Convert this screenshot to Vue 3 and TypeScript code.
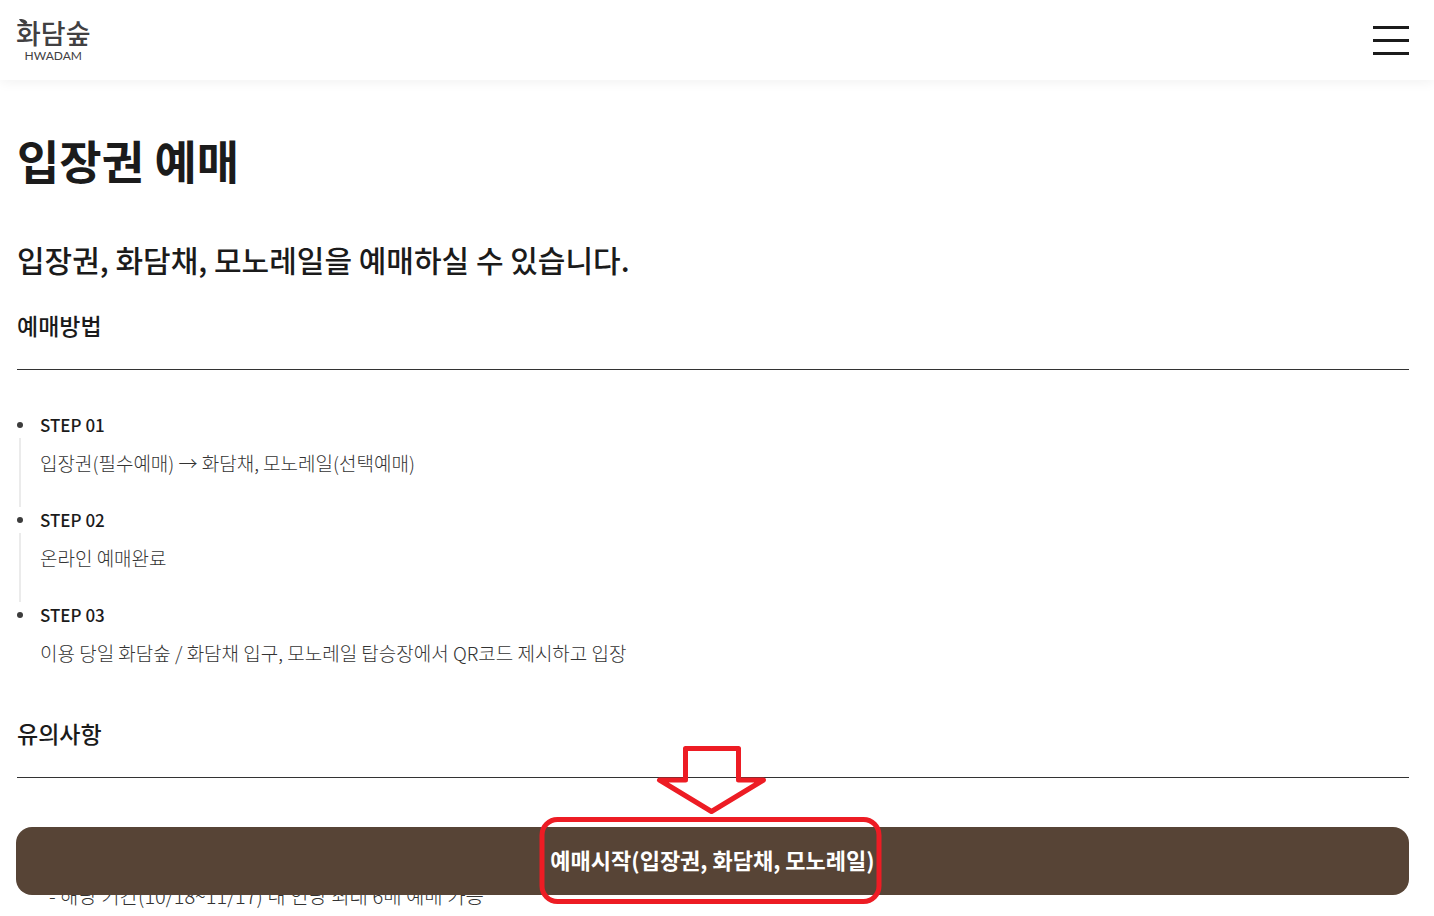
<script setup lang="ts">
interface Step {
  title: string
  text: string
}

const steps: Step[] = [
  { title: 'STEP 01', text: '입장권(필수예매) → 화담채, 모노레일(선택예매)' },
  { title: 'STEP 02', text: '온라인 예매완료' },
  { title: 'STEP 03', text: '이용 당일 화담숲 / 화담채 입구, 모노레일 탑승장에서 QR코드 제시하고 입장' },
]
</script>

<template>
  <div class="page">
    <header class="header">
      <a class="logo" href="#">
        <svg class="leaf" width="9" height="5" viewBox="0 0 9 5" aria-hidden="true">
          <path d="M0 0C4 -0.400 8 1 8.500 4.500C4.500 5 1.500 3.500 0 0Z" fill="#414042" />
        </svg>
        <span class="logo-name">화담숲</span>
        <span class="logo-latin">HWADAM</span>
      </a>
      <button class="menu" type="button" aria-label="메뉴"><span></span><span></span><span></span></button>
    </header>

    <main class="content">
      <h1>입장권 예매</h1>
      <h2>입장권, 화담채, 모노레일을 예매하실 수 있습니다.</h2>

      <section>
        <h3>예매방법</h3>
        <ol class="steps">
          <li v-for="step in steps" :key="step.title">
            <strong>{{ step.title }}</strong>
            <p>{{ step.text }}</p>
          </li>
        </ol>
      </section>

      <section>
        <h3>유의사항</h3>
        <ul class="notes">
          <li>입장권, 화담채, 모노레일 예매 가능 수량 안내</li>
          <li class="sub">- 해당 기간(10/18~11/17) 내 인당 최대 6매 예매 가능</li>
        </ul>
      </section>
    </main>

    <div class="booking">
      <button class="start" type="button">예매시작(입장권, 화담채, 모노레일)</button>
      <div class="highlight" aria-hidden="true">
        <svg width="112" height="70" viewBox="0 0 112 70" fill="none" stroke="#ed1c24" stroke-width="5" stroke-linejoin="round">
          <path d="M31 3.500H84V35H109L57 66.500L5 35H31Z" />
        </svg>
        <div class="frame"></div>
      </div>
    </div>
  </div>
</template>

<style>
html,
body {
  margin: 0;
  background: #fff;
  overflow: hidden;
}
</style>

<style scoped>
.page {
  height: 100vh;
  overflow: hidden;
  color: #1b1b1b;
  font-family: "Noto Sans CJK KR", sans-serif;
}

.header {
  display: flex;
  justify-content: space-between;
  align-items: center;
  height: 80px;
  padding: 0 25px 0 16px;
  box-sizing: border-box;
  box-shadow: 0 2px 12px rgba(0, 0, 0, 0.06);
}

.logo {
  position: relative;
  display: flex;
  flex-direction: column;
  align-items: center;
  gap: 2px;
  color: #414042;
  text-decoration: none;
}

.leaf {
  position: absolute;
  top: 1px;
  left: 3px;
}

.logo-name {
  font-size: 27px;
  font-weight: 500;
  line-height: 30px;
}

.logo-latin {
  font-family: Lato, sans-serif;
  font-size: 12px;
  line-height: 12px;
}

.menu {
  display: flex;
  flex-direction: column;
  gap: 10px;
  width: 36px;
  padding: 0;
  border: 0;
  background: none;
}

.menu span {
  height: 3px;
  background: #1b1b1b;
}

.content {
  padding: 45px 25px 0 17px;
}

h1,
h2,
h3,
p {
  margin: 0;
}

h1 {
  font-size: 46px;
  font-weight: 700;
  line-height: 68px;
}

h2 {
  margin-top: 42px;
  font-size: 30px;
  font-weight: 500;
  line-height: 48px;
}

h3 {
  padding: 24px 0 26px;
  border-bottom: 1px solid #333;
  font-size: 23px;
  font-weight: 500;
  line-height: 36px;
}

.steps,
.notes {
  margin: 0;
  padding: 0;
  list-style: none;
}

.steps {
  padding-top: 40px;
}

.steps li {
  position: relative;
  padding: 0 0 27px 23px;
}

.steps li::before {
  content: "";
  position: absolute;
  top: 12px;
  left: 0;
  width: 6px;
  height: 6px;
  border-radius: 50%;
  background: #3c3c3c;
}

.steps li:not(:last-child)::after {
  content: "";
  position: absolute;
  top: 28px;
  left: 2px;
  width: 2px;
  height: 69px;
  background: #ebebeb;
}

.steps strong {
  display: block;
  font-size: 17px;
  font-weight: 500;
  line-height: 30px;
}

.steps p {
  margin-top: 8px;
  color: #333;
  font-size: 19px;
  font-weight: 300;
  line-height: 30px;
}

.steps li:last-child {
  padding-bottom: 23px;
}

.notes {
  padding-top: 43px;
  color: #333;
  font-size: 19px;
  font-weight: 300;
  line-height: 30px;
}

.notes li {
  padding-left: 23px;
}

.notes .sub {
  margin-top: 30px;
  padding-left: 32px;
  font-size: 20px;
}

.booking {
  position: fixed;
  right: 25px;
  bottom: 21px;
  left: 16px;
}

.start {
  display: block;
  width: 100%;
  height: 68px;
  padding: 0 0 4px;
  border: 0;
  border-radius: 16px;
  background: #574436;
  color: #fff;
  font-family: inherit;
  font-size: 22px;
  font-weight: 700;
}

.highlight {
  position: absolute;
  bottom: -9px;
  left: 50%;
  display: flex;
  flex-direction: column;
  align-items: center;
  gap: 2px;
  padding-right: 5px;
  transform: translateX(-50%);
}

.frame {
  box-sizing: border-box;
  width: 342px;
  height: 87px;
  border: 5px solid #ed1c24;
  border-radius: 18px;
}
</style>
